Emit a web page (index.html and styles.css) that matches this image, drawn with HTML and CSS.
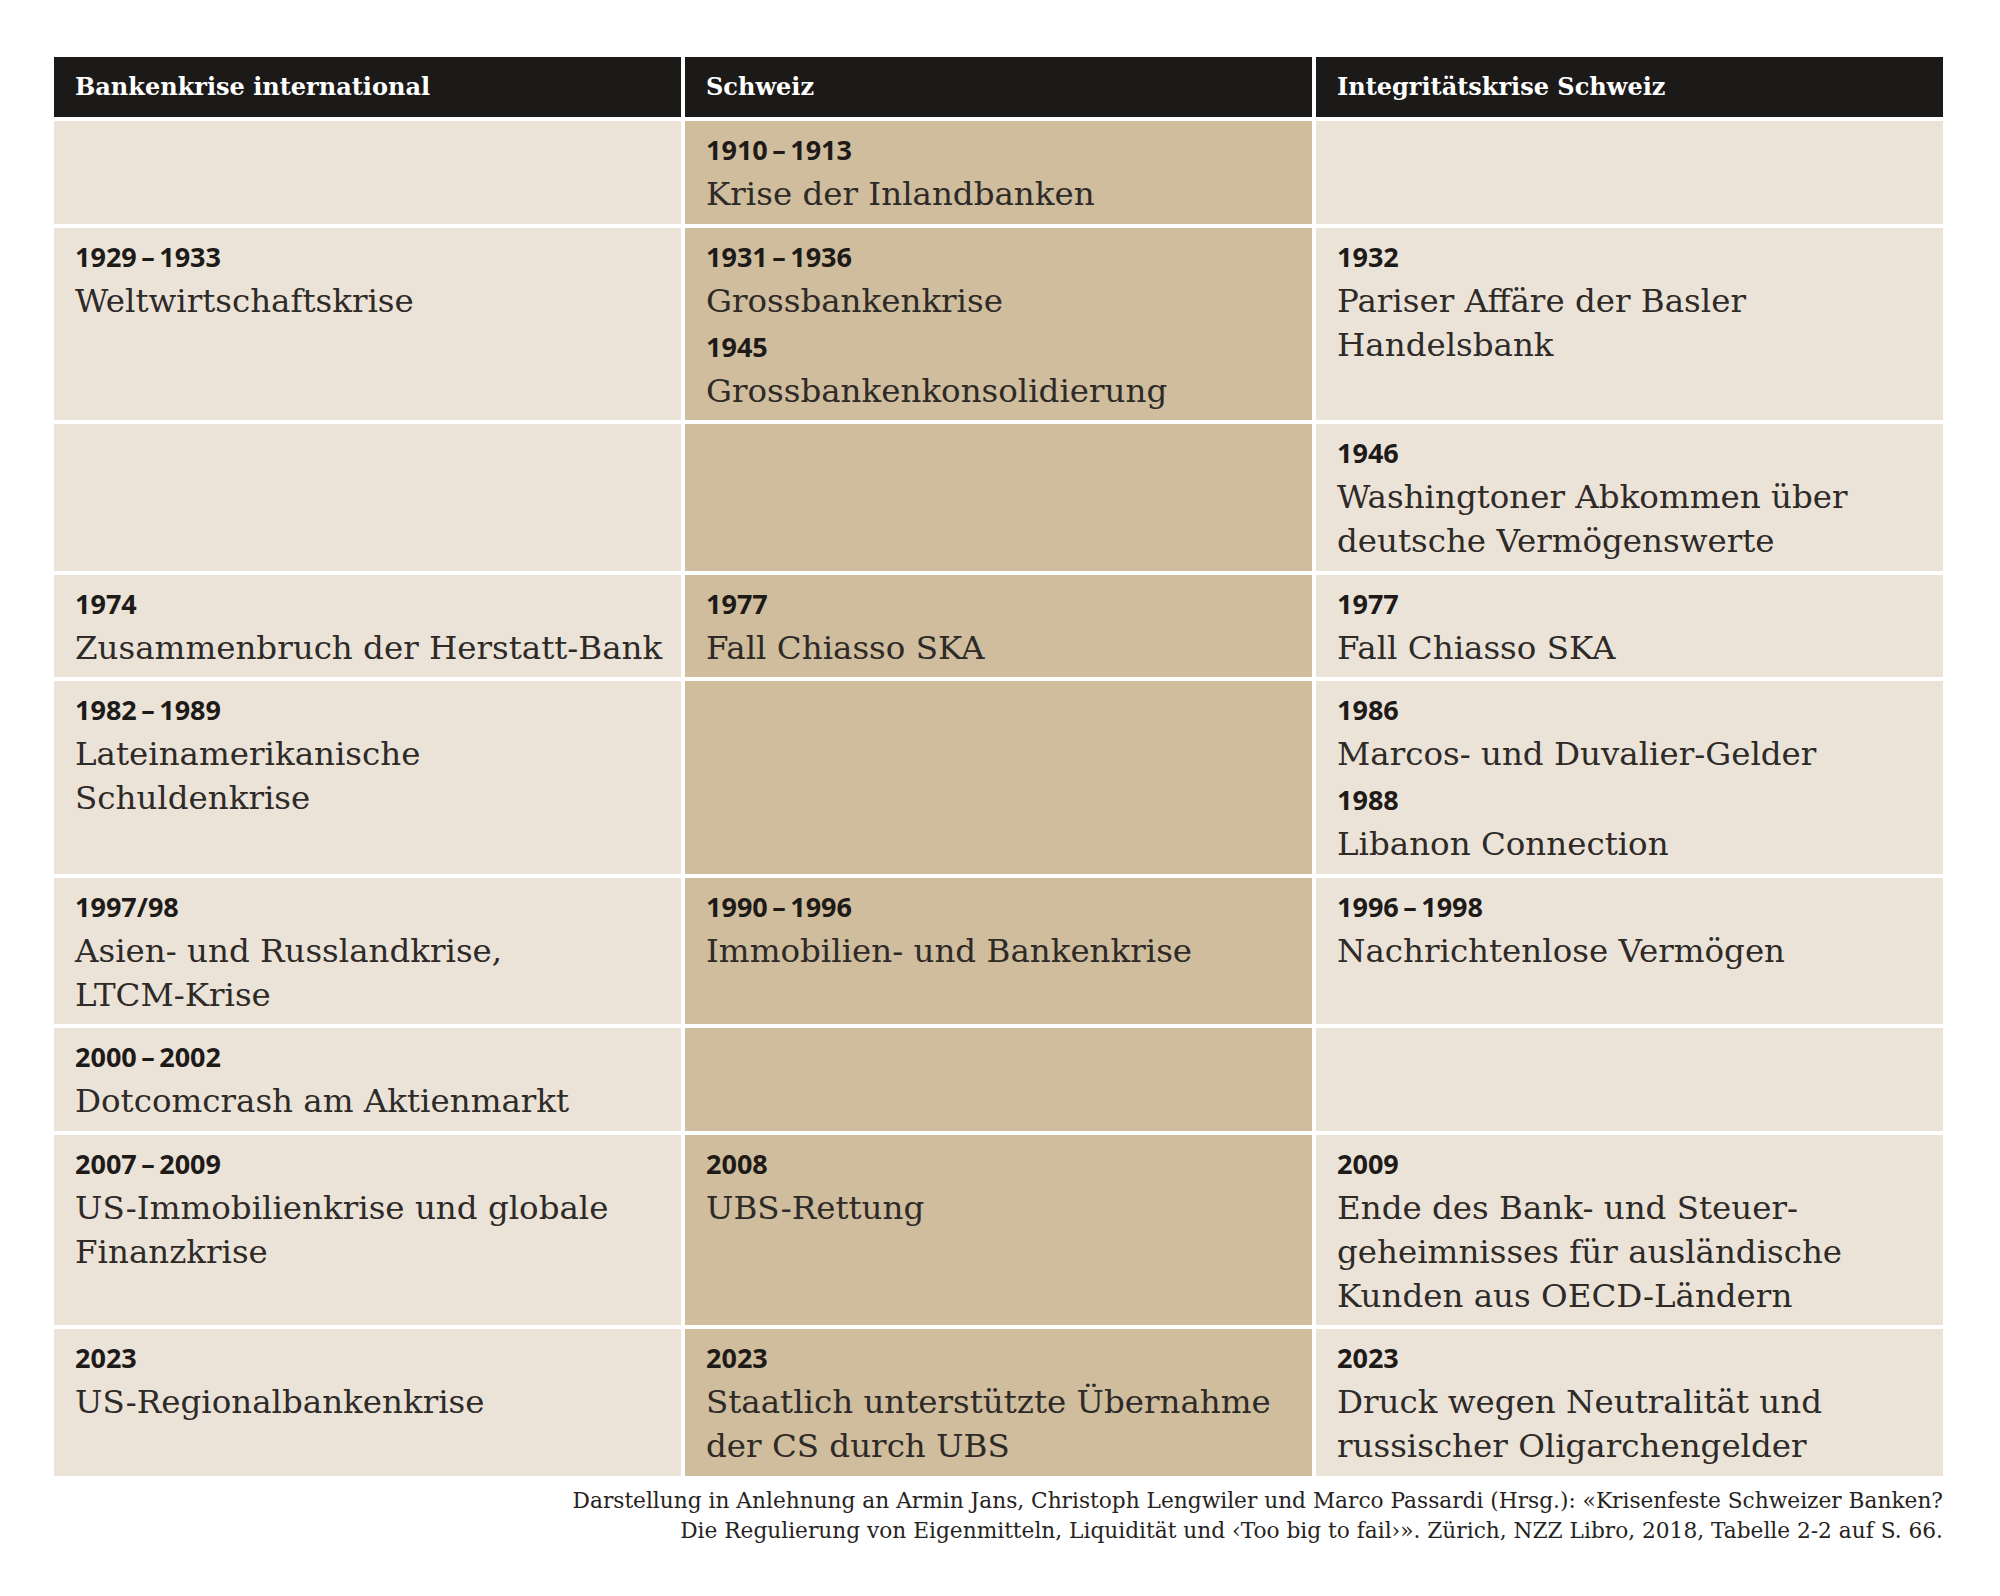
FILE: index.html
```html
<!DOCTYPE html>
<html lang="de">
<head>
<meta charset="utf-8">
<title>Bankenkrisen</title>
<link rel="stylesheet" href="styles.css">
</head>
<body>
<main class="page">
  <div class="table">
    <div class="th">Bankenkrise international</div>
    <div class="th">Schweiz</div>
    <div class="th">Integritätskrise Schweiz</div>

    <div class="cell light"></div>
    <div class="cell tan">
      <div class="entry"><div class="year">1910&thinsp;–&thinsp;1913</div><div class="text">Krise der Inlandbanken</div></div>
    </div>
    <div class="cell light"></div>

    <div class="cell light">
      <div class="entry"><div class="year">1929&thinsp;–&thinsp;1933</div><div class="text">Weltwirtschaftskrise</div></div>
    </div>
    <div class="cell tan">
      <div class="entry"><div class="year">1931&thinsp;–&thinsp;1936</div><div class="text">Grossbankenkrise</div></div>
      <div class="entry"><div class="year">1945</div><div class="text">Grossbankenkonsolidierung</div></div>
    </div>
    <div class="cell light">
      <div class="entry"><div class="year">1932</div><div class="text">Pariser Affäre der Basler<br>Handelsbank</div></div>
    </div>

    <div class="cell light"></div>
    <div class="cell tan"></div>
    <div class="cell light">
      <div class="entry"><div class="year">1946</div><div class="text">Washingtoner Abkommen über<br>deutsche Vermögenswerte</div></div>
    </div>

    <div class="cell light">
      <div class="entry"><div class="year">1974</div><div class="text">Zusammenbruch der Herstatt-Bank</div></div>
    </div>
    <div class="cell tan">
      <div class="entry"><div class="year">1977</div><div class="text">Fall Chiasso SKA</div></div>
    </div>
    <div class="cell light">
      <div class="entry"><div class="year">1977</div><div class="text">Fall Chiasso SKA</div></div>
    </div>

    <div class="cell light">
      <div class="entry"><div class="year">1982&thinsp;–&thinsp;1989</div><div class="text">Lateinamerikanische<br>Schuldenkrise</div></div>
    </div>
    <div class="cell tan"></div>
    <div class="cell light">
      <div class="entry"><div class="year">1986</div><div class="text">Marcos- und Duvalier-Gelder</div></div>
      <div class="entry"><div class="year">1988</div><div class="text">Libanon Connection</div></div>
    </div>

    <div class="cell light">
      <div class="entry"><div class="year">1997/98</div><div class="text">Asien- und Russlandkrise,<br>LTCM-Krise</div></div>
    </div>
    <div class="cell tan">
      <div class="entry"><div class="year">1990&thinsp;–&thinsp;1996</div><div class="text">Immobilien- und Bankenkrise</div></div>
    </div>
    <div class="cell light">
      <div class="entry"><div class="year">1996&thinsp;–&thinsp;1998</div><div class="text">Nachrichtenlose Vermögen</div></div>
    </div>

    <div class="cell light">
      <div class="entry"><div class="year">2000&thinsp;–&thinsp;2002</div><div class="text">Dotcomcrash am Aktienmarkt</div></div>
    </div>
    <div class="cell tan"></div>
    <div class="cell light"></div>

    <div class="cell light">
      <div class="entry"><div class="year">2007&thinsp;–&thinsp;2009</div><div class="text">US-Immobilienkrise und globale<br>Finanzkrise</div></div>
    </div>
    <div class="cell tan">
      <div class="entry"><div class="year">2008</div><div class="text">UBS-Rettung</div></div>
    </div>
    <div class="cell light">
      <div class="entry"><div class="year">2009</div><div class="text">Ende des Bank- und Steuer-<br>geheimnisses für ausländische<br>Kunden aus OECD-Ländern</div></div>
    </div>

    <div class="cell light">
      <div class="entry"><div class="year">2023</div><div class="text">US-Regionalbankenkrise</div></div>
    </div>
    <div class="cell tan">
      <div class="entry"><div class="year">2023</div><div class="text">Staatlich unterstützte Übernahme<br>der CS durch UBS</div></div>
    </div>
    <div class="cell light">
      <div class="entry"><div class="year">2023</div><div class="text">Druck wegen Neutralität und<br>russischer Oligarchengelder</div></div>
    </div>
  </div>
  <p class="source">Darstellung in Anlehnung an Armin Jans, Christoph Lengwiler und Marco Passardi (Hrsg.): «Krisenfeste Schweizer Banken?<br>Die Regulierung von Eigenmitteln, Liquidität und ‹Too big to fail›». Zürich, NZZ Libro, 2018, Tabelle 2-2 auf S. 66.</p>
</main>
</body>
</html>
```
FILE: styles.css
```css
html, body {
  margin: 0;
  padding: 0;
  background: #ffffff;
}

.page {
  padding: 57px 0 0 54px;
  width: 1889px;
}

.table {
  display: grid;
  grid-template-columns: repeat(3, 627px);
  column-gap: 4px;
  row-gap: 4px;
}

.th {
  background: #1c1a19;
  color: #ffffff;
  font-family: "DejaVu Serif", "Liberation Serif", serif;
  font-weight: 700;
  font-size: 24px;
  height: 60px;
  line-height: 60px;
  padding: 0 0 0 21px;
  white-space: nowrap;
}

.cell {
  padding: 7px 0 7.5px 21px;
  min-height: 88px;
}

.light {
  background: #ebe3d8;
}

.tan {
  background: #cfbd9d;
}

.entry + .entry {
  margin-top: 2px;
}

.year {
  font-family: "Open Sans", "Noto Sans", sans-serif;
  font-weight: 700;
  font-size: 27px;
  line-height: 44px;
  color: #1d1a18;
  white-space: nowrap;
}

.text {
  font-family: "DejaVu Serif", "Liberation Serif", serif;
  font-weight: 400;
  font-size: 32.5px;
  line-height: 44px;
  color: #2e2a27;
  white-space: nowrap;
}

.source {
  margin: 10px 0 0 0;
  text-align: right;
  font-family: "DejaVu Serif", "Liberation Serif", serif;
  font-size: 21.7px;
  line-height: 30px;
  color: #262321;
  white-space: nowrap;
}
```
